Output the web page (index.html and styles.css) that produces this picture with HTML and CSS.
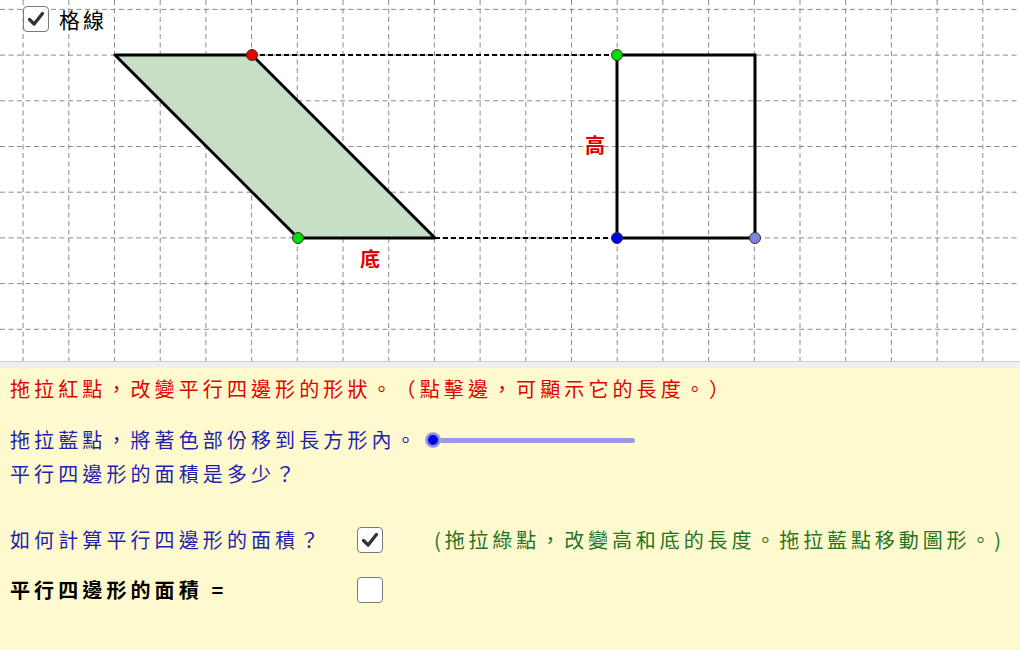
FILE: index.html
```html
<!DOCTYPE html>
<html lang="zh-Hant">
<head>
<meta charset="utf-8">
<title>平行四邊形的面積</title>
<link rel="stylesheet" href="styles.css">
</head>
<body>
<div class="canvas">
  <svg class="board" width="1020" height="361" viewBox="0 0 1020 361">
    <g class="grid">
      <line x1="23.1" y1="0" x2="23.1" y2="361"/><line x1="68.8" y1="0" x2="68.8" y2="361"/>
      <line x1="114.5" y1="0" x2="114.5" y2="361"/><line x1="160.2" y1="0" x2="160.2" y2="361"/>
      <line x1="205.9" y1="0" x2="205.9" y2="361"/><line x1="251.6" y1="0" x2="251.6" y2="361"/>
      <line x1="297.3" y1="0" x2="297.3" y2="361"/><line x1="343" y1="0" x2="343" y2="361"/>
      <line x1="388.7" y1="0" x2="388.7" y2="361"/><line x1="434.4" y1="0" x2="434.4" y2="361"/>
      <line x1="480.1" y1="0" x2="480.1" y2="361"/><line x1="525.8" y1="0" x2="525.8" y2="361"/>
      <line x1="571.5" y1="0" x2="571.5" y2="361"/><line x1="617.2" y1="0" x2="617.2" y2="361"/>
      <line x1="662.9" y1="0" x2="662.9" y2="361"/><line x1="708.6" y1="0" x2="708.6" y2="361"/>
      <line x1="754.3" y1="0" x2="754.3" y2="361"/><line x1="800" y1="0" x2="800" y2="361"/>
      <line x1="845.7" y1="0" x2="845.7" y2="361"/><line x1="891.4" y1="0" x2="891.4" y2="361"/>
      <line x1="937.1" y1="0" x2="937.1" y2="361"/><line x1="982.8" y1="0" x2="982.8" y2="361"/>
      <line x1="0" y1="9.4" x2="1020" y2="9.4"/><line x1="0" y1="55.1" x2="1020" y2="55.1"/>
      <line x1="0" y1="100.8" x2="1020" y2="100.8"/><line x1="0" y1="146.5" x2="1020" y2="146.5"/>
      <line x1="0" y1="192.2" x2="1020" y2="192.2"/><line x1="0" y1="237.9" x2="1020" y2="237.9"/>
      <line x1="0" y1="283.6" x2="1020" y2="283.6"/><line x1="0" y1="329.3" x2="1020" y2="329.3"/>
    </g>
    <polygon class="para" points="115,55 252,55 435,238 298,238"/>
    <line class="guide" x1="252" y1="55" x2="617" y2="55"/>
    <line class="guide" x1="435" y1="238" x2="617" y2="238"/>
    <rect class="rect" x="617" y="55" width="138" height="183"/>
    <text class="lbl" x="595" y="153" text-anchor="middle">高</text>
    <text class="lbl" x="370" y="267" text-anchor="middle">底</text>
    <circle class="pt red" cx="252" cy="55" r="5.5"/>
    <circle class="pt green" cx="617" cy="55" r="5.5"/>
    <circle class="pt green" cx="298" cy="238" r="5.5"/>
    <circle class="pt blue" cx="617" cy="238" r="5.5"/>
    <circle class="pt lilac" cx="755" cy="238" r="5.5"/>
  </svg>
  <label class="gridtoggle">
    <span class="box checked"><svg viewBox="0 0 26 26" width="24" height="24"><path d="M6 13.5 L11 18.5 L20 7" /></svg></span>
    <span class="toggletext">格線</span>
  </label>
</div>
<div class="sep"></div>
<div class="panel">
  <p class="row red-text first">拖拉紅點，改變平行四邊形的形狀。（點擊邊，可顯示它的長度。）</p>
  <div class="row slider-row">
    <span class="blue-text textcol">拖拉藍點，將著色部份移到長方形內。</span>
    <div class="slider"><div class="track"></div><div class="knob"></div></div>
  </div>
  <p class="row blue-text">平行四邊形的面積是多少？</p>
  <div class="row check-row q">
    <span class="blue-text qcol">如何計算平行四邊形的面積？</span>
    <span class="box checked"><svg viewBox="0 0 26 26" width="24" height="24"><path d="M6 13.5 L11 18.5 L20 7" /></svg></span>
    <span class="green-text hint">(拖拉綠點，改變高和底的長度。拖拉藍點移動圖形。)</span>
  </div>
  <div class="row check-row a">
    <span class="black-text qcol">平行四邊形的面積 =</span>
    <span class="box"></span>
  </div>
</div>
</body>
</html>
```
FILE: styles.css
```css
html, body {
  margin: 0;
  padding: 0;
  background: #fffacd;
  width: 1020px;
  height: 650px;
  overflow: hidden;
  font-family: "Noto Sans CJK TC", "Noto Sans CJK SC", sans-serif;
  font-kerning: none;
  font-feature-settings: "chws" 0, "halt" 0, "palt" 0, "kern" 0;
  text-spacing-trim: space-all;
}
.canvas {
  position: relative;
  width: 1020px;
  height: 361px;
  background: #fff;
}
.board { display: block; }
.grid line {
  stroke: #8a8a8a;
  stroke-width: 1;
  stroke-dasharray: 5 3.5;
}
.para {
  fill: #c6dfc6;
  stroke: #000;
  stroke-width: 3;
  stroke-linejoin: round;
}
.guide {
  stroke: #000;
  stroke-width: 2;
  stroke-dasharray: 5 3;
}
.rect {
  fill: none;
  stroke: #000;
  stroke-width: 3;
}
.lbl {
  fill: #e00000;
  font-size: 20px;
  font-weight: bold;
  font-family: "Noto Sans CJK TC", sans-serif;
}
.pt { stroke: #333; stroke-width: 1; }
.pt.red { fill: #ee0000; }
.pt.green { fill: #00dd00; }
.pt.blue { fill: #0000ee; }
.pt.lilac { fill: #8080e0; }

.gridtoggle {
  position: absolute;
  left: 23px;
  top: 6px;
  display: flex;
  align-items: center;
  gap: 10px;
}
.toggletext {
  font-size: 21px;
  line-height: 26px;
  color: #000;
  letter-spacing: 3px;
}
.box {
  box-sizing: border-box;
  width: 26px;
  height: 26px;
  border: 1.5px solid #7a7a7a;
  border-radius: 4px;
  background: #fff;
  display: flex;
  align-items: center;
  justify-content: center;
}
.box svg path {
  fill: none;
  stroke: #333;
  stroke-width: 3.6;
  stroke-linecap: round;
  stroke-linejoin: round;
}
.sep {
  height: 7px;
  background: #efefef;
  border-top: 1px solid #cfcfcf;
  box-sizing: border-box;
}
.panel {
  padding: 0 0 0 10px;
}
.row {
  margin: 0;
  font-size: 20px;
  line-height: 28px;
  letter-spacing: 4.1px;
  white-space: nowrap;
}
.first { margin-top: 7px; }
.red-text { color: #e00000; }
.blue-text { color: #1f1fb0; }
.green-text { color: #267326; }
.black-text { color: #000; font-weight: bold; }
.slider-row {
  margin-top: 23px;
  display: grid;
  grid-template-columns: 416px 220px;
  align-items: center;
}
.slider {
  position: relative;
  height: 20px;
  display: flex;
  align-items: center;
}
.track {
  margin-left: 7px;
  width: 202px;
  height: 5px;
  border-radius: 3px;
  background: #9a9ae0;
}
.knob {
  position: absolute;
  left: 0;
  top: 3px;
  width: 10px;
  height: 10px;
  border-radius: 50%;
  background: #0000ee;
  border: 2px solid #8c8ce0;
  box-shadow: 0 0 0 1px #b0b0e8;
}
.slider-row + .row { margin-top: 6px; }
.check-row {
  display: grid;
  grid-template-columns: 347px 26px auto;
  align-items: center;
}
.check-row.q { margin-top: 38px; }
.check-row.a { margin-top: 22px; }
.hint { margin-left: 51px; letter-spacing: 3.9px; }
```
